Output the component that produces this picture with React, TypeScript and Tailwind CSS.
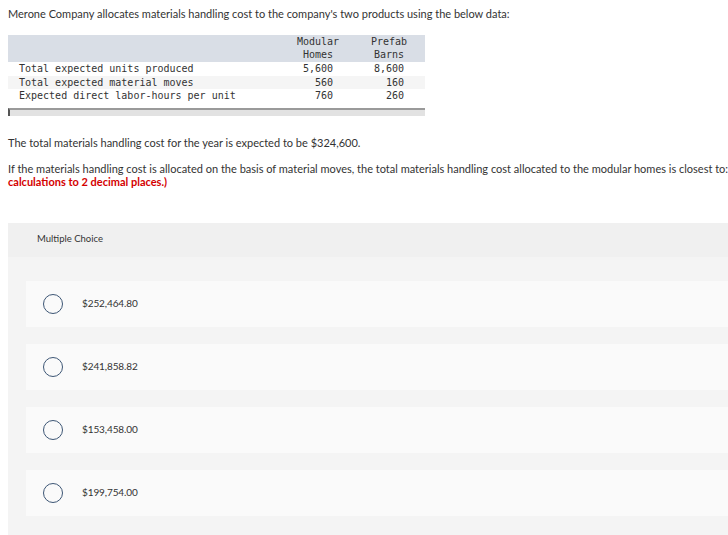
const ROWS = [
  { label: 'Total expected units produced', a: '5,600', b: '8,600' },
  { label: 'Total expected material moves', a: '560', b: '160' },
  { label: 'Expected direct labor-hours per unit', a: '760', b: '260' },
];

const CHOICES = ['$252,464.80', '$241,858.82', '$153,458.00', '$199,754.00'];

export default function App() {
  return (
    <div className="w-[728px] h-[535px] overflow-hidden bg-white text-[#333] font-['Lato',sans-serif]">
      <div className="w-[860px] pl-2 pt-[7px]">
        <p className="text-[11px] leading-[14px]">
          Merone Company allocates materials handling cost to the company's two products using the below data:
        </p>

        {/* data table */}
        <div className="mt-[14px] w-[417px] font-['DejaVu_Sans_Mono',monospace] text-[10px] leading-[13px] text-[#333]">
          <div className="flex bg-[#d9dee6] pb-[1px]">
            <div className="flex-1" />
            <div className="w-[54px] text-center">
              <div>Modular</div>
              <div>Homes</div>
            </div>
            <div className="w-[17px]" />
            <div className="w-[54px] text-center">
              <div>Prefab</div>
              <div>Barns</div>
            </div>
            <div className="w-[9px]" />
          </div>
          {ROWS.map((r, i) => (
            <div key={r.label} className={`flex h-[13.5px] items-center ${i === 1 ? 'bg-[#f5f5f5]' : ''}`}>
              <div className="flex-1 pl-[11px]">{r.label}</div>
              <div className="w-[54px] text-right pr-[12px]">{r.a}</div>
              <div className="w-[17px]" />
              <div className="w-[54px] text-right pr-[12px]">{r.b}</div>
              <div className="w-[9px]" />
            </div>
          ))}
          <div className="mt-[5px] h-[8px] border-t-2 border-[#9a9a9a] bg-[#e2e2e2] border-l-2 border-l-[#555]" />
        </div>

        <p className="mt-[20px] text-[11px] leading-[14px]">
          The total materials handling cost for the year is expected to be $324,600.
        </p>
        <p className="mt-[12px] text-[11px] leading-[13px]">
          If the materials handling cost is allocated on the basis of material moves, the total materials handling cost allocated to the modular homes is closest to:{' '}
          <span className="font-bold text-[#d40000]">(Round your intermediate calculations to 2 decimal places.)</span>
        </p>

        {/* multiple choice panel */}
        <div className="mt-[35px] bg-[#f4f4f4] pb-6">
          <div className="h-[34px] bg-[#f0f0f0] pl-[29px] flex items-center text-[9.5px] text-[#333]">
            Multiple Choice
          </div>
          <div className="pl-[18px] pt-[24px] flex flex-col gap-[17px]">
            {CHOICES.map((c) => (
              <div key={c} className="h-[46px] bg-[#fafafa] flex items-center">
                <div className="ml-[17px] w-[20px] h-[20px] rounded-full border-[1.5px] border-[#3d5675]" />
                <span className="ml-[19px] text-[10px] tracking-[-0.1px] text-[#333]">{c}</span>
              </div>
            ))}
          </div>
        </div>
      </div>
    </div>
  );
}
